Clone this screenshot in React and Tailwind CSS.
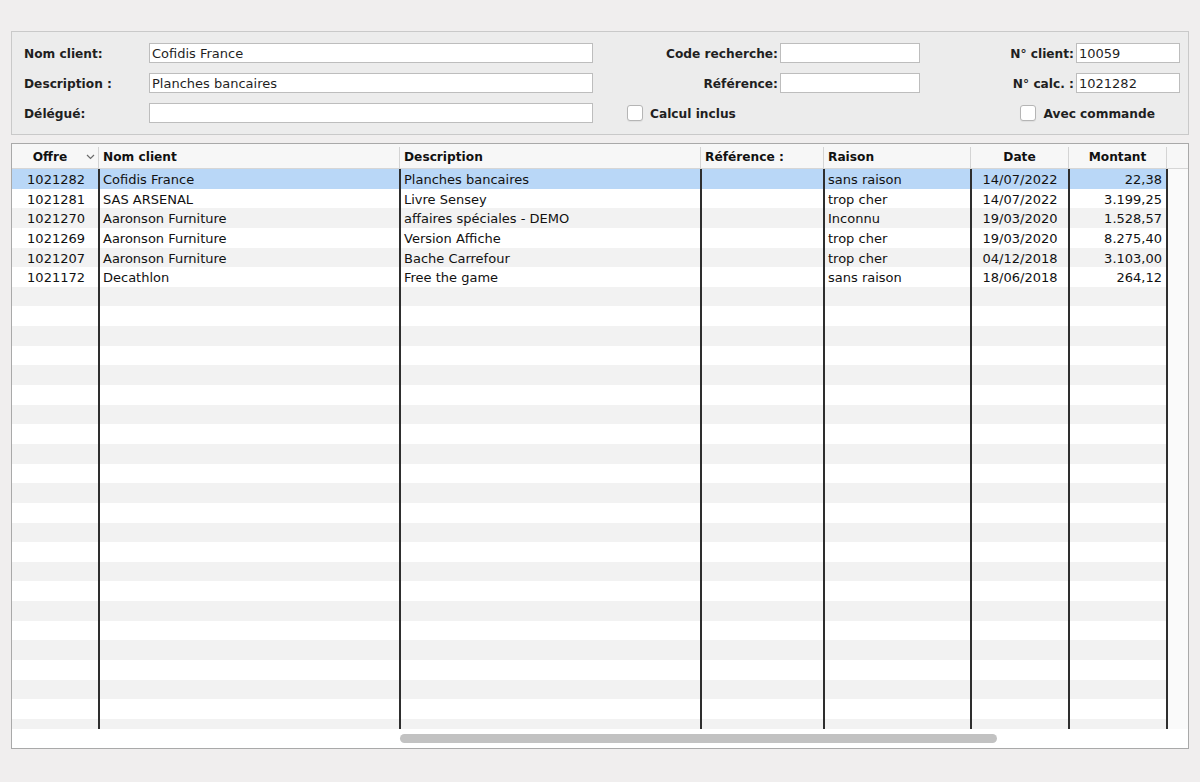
import React from 'react';

const rows = [
  ['1021282', 'Cofidis France', 'Planches bancaires', '', 'sans raison', '14/07/2022', '22,38'],
  ['1021281', 'SAS ARSENAL', 'Livre Sensey', '', 'trop cher', '14/07/2022', '3.199,25'],
  ['1021270', 'Aaronson Furniture', 'affaires spéciales - DEMO', '', 'Inconnu', '19/03/2020', '1.528,57'],
  ['1021269', 'Aaronson Furniture', 'Version Affiche', '', 'trop cher', '19/03/2020', '8.275,40'],
  ['1021207', 'Aaronson Furniture', 'Bache Carrefour', '', 'trop cher', '04/12/2018', '3.103,00'],
  ['1021172', 'Decathlon', 'Free the game', '', 'sans raison', '18/06/2018', '264,12'],
];

// body cell classes per column (width, divider, alignment)
const cellCls = [
  'w-[86px] justify-end pr-[13px]',
  'w-[301px] border-l-2 border-[#2e2e2e] pl-[3px]',
  'w-[301px] border-l-2 border-[#2e2e2e] pl-[3px]',
  'w-[123px] border-l-2 border-[#2e2e2e] pl-[3px]',
  'w-[147px] border-l-2 border-[#2e2e2e] pl-[3px]',
  'w-[98px] border-l-2 border-[#2e2e2e] justify-center',
  'w-[98px] border-l-2 border-[#2e2e2e] justify-end pr-[4px]',
];

const headCls = [
  'w-[86px] justify-center pr-[10px] relative',
  'w-[301px] border-l border-[#d4d4d4] pl-[4px]',
  'w-[301px] border-l border-[#d4d4d4] pl-[4px]',
  'w-[123px] border-l border-[#d4d4d4] pl-[4px]',
  'w-[147px] border-l border-[#d4d4d4] pl-[4px]',
  'w-[98px] border-l border-[#d4d4d4] justify-center',
  'w-[98px] border-l border-[#d4d4d4] justify-center',
];

const heads = ['Offre', 'Nom client', 'Description', 'Référence :', 'Raison', 'Date', 'Montant'];

const Field = ({ value, className }) => (
  <input
    readOnly
    defaultValue={value}
    className={`h-5 border border-[#bdbdbd] bg-white px-[2px] pt-[1px] text-[13px] text-[#1f1f1f] outline-none ${className}`}
  />
);

const Checkbox = ({ label }) => (
  <div className="flex items-center gap-[7px]">
    <span className="w-4 h-4 rounded-[3px] border border-[#b5b5b5] bg-white shadow-[0_1px_1px_rgba(0,0,0,0.06)]"></span>
    <span className="font-bold text-[12.2px] text-[#1f1f1f] pt-[2px]">{label}</span>
  </div>
);

const Label = ({ children, right }) => (
  <div className={`font-bold text-[12.2px] text-[#1f1f1f] pt-[2px] ${right ? 'text-right pr-[2px]' : ''}`}>{children}</div>
);

export default function App() {
  const bodyRows = Array.from({ length: 29 }, (_, i) => rows[i] || null);

  return (
    <div
      className="w-[1200px] h-[782px] bg-[#f0eeee] pt-[31px] px-[11px] overflow-hidden"
      style={{ fontFamily: '"DejaVu Sans", Verdana, sans-serif' }}
    >
      {/* Search panel */}
      <div className="h-[104px] bg-[#ececec] border border-[#c9c9c9] pt-[6px] pl-[12px] pr-[8px]">
        <div className="grid grid-cols-[125px_444px_187px_140px_156px_104px] grid-rows-[30px_30px_30px] items-center">
          <Label>Nom client:</Label>
          <Field value="Cofidis France" className="w-[444px]" />
          <Label right>Code recherche:</Label>
          <Field value="" className="w-[140px]" />
          <Label right>N° client:</Label>
          <Field value="10059" className="w-[104px]" />

          <Label>Description :</Label>
          <Field value="Planches bancaires" className="w-[444px]" />
          <Label right>Référence:</Label>
          <Field value="" className="w-[140px]" />
          <Label right>N° calc. :</Label>
          <Field value="1021282" className="w-[104px]" />

          <Label>Délégué:</Label>
          <Field value="" className="w-[444px]" />
          <div className="pl-[34px]">
            <Checkbox label="Calcul inclus" />
          </div>
          <div></div>
          <div className="col-span-2 flex justify-end pr-[25px]">
            <Checkbox label="Avec commande" />
          </div>
        </div>
      </div>

      {/* Results table */}
      <div className="mt-[8px] h-[606px] bg-white border border-[#a9a9a9] flex flex-col text-[13px] text-[#111]">
        <div className="h-[25px] flex bg-[#f7f7f7] border-b border-[#d6d6d6] font-bold text-[12.2px] pt-[3px]">
          {heads.map((h, i) => (
            <div key={h} className={`flex items-center ${headCls[i]}`}>
              {h}
              {i === 0 && (
                <svg className="absolute right-[3px] top-[7px]" width="9" height="6" viewBox="0 0 9 6">
                  <path d="M1 1l3.5 3.5L8 1" fill="none" stroke="#6b6b6b" strokeWidth="1.2" />
                </svg>
              )}
            </div>
          ))}
          <div className="flex-1 border-l border-[#d4d4d4]"></div>
        </div>

        <div className="h-[560px] overflow-hidden">
          {bodyRows.map((r, i) => {
            const bg = i === 0 ? 'bg-[#b9d7f7]' : i % 2 === 0 ? 'bg-[#f2f2f2]' : 'bg-white';
            return (
              <div key={i} className="h-[19.65px] flex">
                {cellCls.map((c, j) => (
                  <div key={j} className={`h-full flex items-center pt-[2px] whitespace-nowrap ${bg} ${c}`}>
                    {r ? r[j] : ''}
                  </div>
                ))}
                <div className="flex-1 h-full border-l-2 border-[#2e2e2e] bg-[#fafafa]"></div>
              </div>
            );
          })}
        </div>

        {/* horizontal scrollbar */}
        <div className="h-[19px] pt-[5px] pl-[388px] bg-white">
          <div className="w-[597px] h-[9px] rounded-full bg-[#c2c2c2]"></div>
        </div>
      </div>
    </div>
  );
}
